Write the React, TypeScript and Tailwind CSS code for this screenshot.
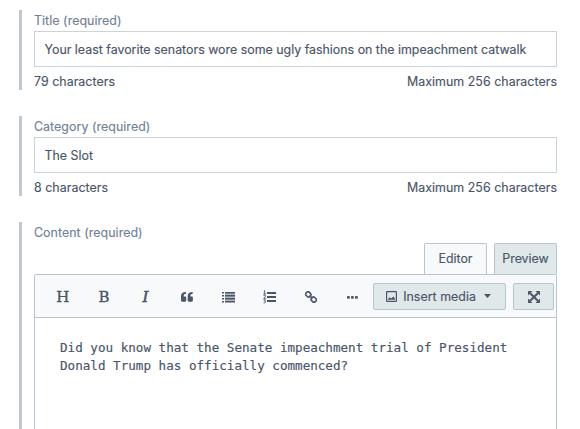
import type { ReactNode } from 'react';

function Field({ label, value, count }: { label: string; value: string; count: string }) {
  return (
    <section className="mb-[26px] h-20 border-l-[3px] border-[#bdcad1] pl-3">
      <label className="block h-[21px] tracking-[0.05px] text-[#718096] leading-[21px]">{label}</label>
      <div className="flex h-9 items-center border border-[#c9d5da] pt-[2px] pl-[9.5px]">
        <span className="leading-5 whitespace-nowrap">{value}</span>
      </div>
      <div className="flex justify-between pt-1 tracking-[0.04px] leading-[21px]">
        <span>{count}</span>
        <span>Maximum 256 characters</span>
      </div>
    </section>
  );
}

function Tool({ children }: { children: ReactNode }) {
  return <span className="flex h-7 w-[41.4px] items-center justify-center">{children}</span>;
}

function QuoteIcon() {
  return (
    <svg width="12" height="10" viewBox="0 0 12 10" fill="currentColor">
      <path d="M5 0v1.700C3.500 1.800 2.700 2.600 2.700 4v.4H4c.7 0 1.200.5 1.200 1.200v3c0 .7-.5 1.200-1.200 1.200H1.200C.5 9.800 0 9.300 0 8.600V4C0 1.500 1.800.1 5 0Z" />
      <path d="M11.700 0v1.700C10.200 1.800 9.400 2.600 9.400 4v.4h1.300c.7 0 1.200.5 1.200 1.200v3c0 .7-.5 1.200-1.200 1.200H7.900c-.7 0-1.200-.5-1.200-1.200V4C6.700 1.500 8.500.1 11.700 0Z" />
    </svg>
  );
}

function BulletListIcon() {
  return (
    <svg width="13" height="11" viewBox="0 0 13 11" fill="currentColor">
      <path opacity=".4" d="M3 1h10v9H3z" />
      <path d="M0 0h2v1.500H0zM3 0h10v1.500H3zM0 3h2v1.500H0zM3 3h10v1.500H3zM0 6h2v1.500H0zM3 6h10v1.500H3zM0 9h2v1.500H0zM3 9h10v1.500H3z" />
    </svg>
  );
}

function NumberListIcon() {
  return (
    <svg width="13" height="14" viewBox="0 0 13 14" fill="currentColor">
      <path d="M4 2h9v2H4zM4 6h9v2H4zM4 10h9v2H4z" />
      <path d="M.8 1 1.700.6v3.400M.4 4h2.500M.5 5.300h1.900v1.200L.7 8.300h2.200M.5 9.800h2L1.500 11.200c1.800 0 1.300 2-.9 1.700" fill="none" stroke="currentColor" strokeWidth=".9" />
    </svg>
  );
}

function LinkIcon() {
  return (
    <svg width="12" height="12" viewBox="0 0 12 12" fill="none" stroke="currentColor" strokeWidth="1.600">
      <rect x="-2.600" y="-2.200" width="5.200" height="4.400" rx="1.900" transform="translate(3.300 3.400) rotate(45)" />
      <rect x="-2.600" y="-2.200" width="5.200" height="4.400" rx="1.900" transform="translate(8.700 8.600) rotate(45)" />
      <path d="m4.500 4.500 3 3" />
    </svg>
  );
}

function DotsIcon() {
  return (
    <svg width="11" height="3" viewBox="0 0 11 3" fill="currentColor">
      <rect width="2.800" height="2.800" rx=".8" />
      <rect x="4" width="2.800" height="2.800" rx=".8" />
      <rect x="8" width="2.800" height="2.800" rx=".8" />
    </svg>
  );
}

function ImageIcon() {
  return (
    <svg width="11" height="11" viewBox="0 0 11 11" fill="currentColor">
      <rect x=".6" y=".6" width="9.800" height="9.800" rx=".5" fill="none" stroke="currentColor" strokeWidth="1.200" />
      <path d="M2 8.800V8L3.800 6.200l1.500 1.300 2-1.900L9 7.500v1.300Z" />
    </svg>
  );
}

function ExpandIcon() {
  return (
    <svg width="12" height="12" viewBox="0 0 12 12" fill="currentColor">
      <path d="M2.200 2.200l7.600 7.600M9.800 2.200 2.200 9.800" stroke="currentColor" strokeWidth="2" />
      <path d="M.5 0h4L0 4.500v-4ZM7.500 0h4l.5.5v4ZM0 7.500 4.500 12h-4L0 11.500ZM12 7.500v4l-.5.5h-4Z" />
    </svg>
  );
}

export default function App() {
  return (
    <main className="h-[429px] w-[580px] overflow-hidden bg-white pt-[10px] pr-[23px] pl-[19px] font-['Inter',sans-serif] text-[12.4px] text-[#4a5568] [-webkit-text-stroke:0.15px]">
      <Field
        label="Title (required)"
        value="Your least favorite senators wore some ugly fashions on the impeachment catwalk"
        count="79 characters"
      />
      <Field label="Category (required)" value="The Slot" count="8 characters" />
      <section className="h-[240px] border-l-[3px] border-[#bdcad1] pl-3">
        <label className="block h-[21px] tracking-[0.05px] text-[#718096] leading-[21px]">Content (required)</label>
        <div className="flex h-[31px] justify-end gap-[7px]">
          <button className="w-[63px] rounded-t-xs border border-b-0 border-[#b5c6ce] bg-[#f7f9fb]">Editor</button>
          <button className="w-[63px] rounded-t-xs border border-b-0 border-[#b5c6ce] bg-[#e0e8e9]">Preview</button>
        </div>
        <div className="h-[188px] rounded-t-xs border border-[#b5c6ce]">
          <div className="flex h-[43px] items-center justify-between border-b border-[#b5c6ce] bg-[#f7f9fb] pr-[2px] pl-[7px]">
            <div className="flex items-center pt-[2px]">
              <Tool><span className="pt-px font-['DejaVu_Serif',serif] text-[15px] [-webkit-text-stroke:0.35px]">H</span></Tool>
              <Tool><span className="pt-px font-['DejaVu_Serif',serif] text-[15px] [-webkit-text-stroke:0.35px]">B</span></Tool>
              <Tool><span className="pt-px font-['DejaVu_Serif',serif] text-[15px] italic [-webkit-text-stroke:0.6px]">I</span></Tool>
              <Tool><QuoteIcon /></Tool>
              <Tool><BulletListIcon /></Tool>
              <Tool><NumberListIcon /></Tool>
              <Tool><LinkIcon /></Tool>
              <Tool><DotsIcon /></Tool>
            </div>
            <div className="flex gap-[7px]">
              <button className="flex h-[27px] w-[133px] items-center rounded-xs border border-[#b5c6ce] bg-[#e0e8e9] pl-3">
                <ImageIcon />
                <span className="mt-[2px] ml-[6px] tracking-[0.04px] whitespace-nowrap">Insert media</span>
                <svg className="ml-[8px]" width="7" height="4" viewBox="0 0 7 4" fill="currentColor"><path d="M0 0h7L3.500 4Z" /></svg>
              </button>
              <button className="flex h-[27px] w-[41px] items-center justify-center rounded-xs border border-[#b5c6ce] bg-[#e0e8e9] pt-px">
                <ExpandIcon />
              </button>
            </div>
          </div>
          <p className="pt-[21px] pl-[25px] font-['DejaVu_Sans_Mono',monospace] text-[12.6px] leading-[18px] whitespace-nowrap">
            Did you know that the Senate impeachment trial of President<br />
            Donald Trump has officially commenced?
          </p>
        </div>
      </section>
    </main>
  );
}
